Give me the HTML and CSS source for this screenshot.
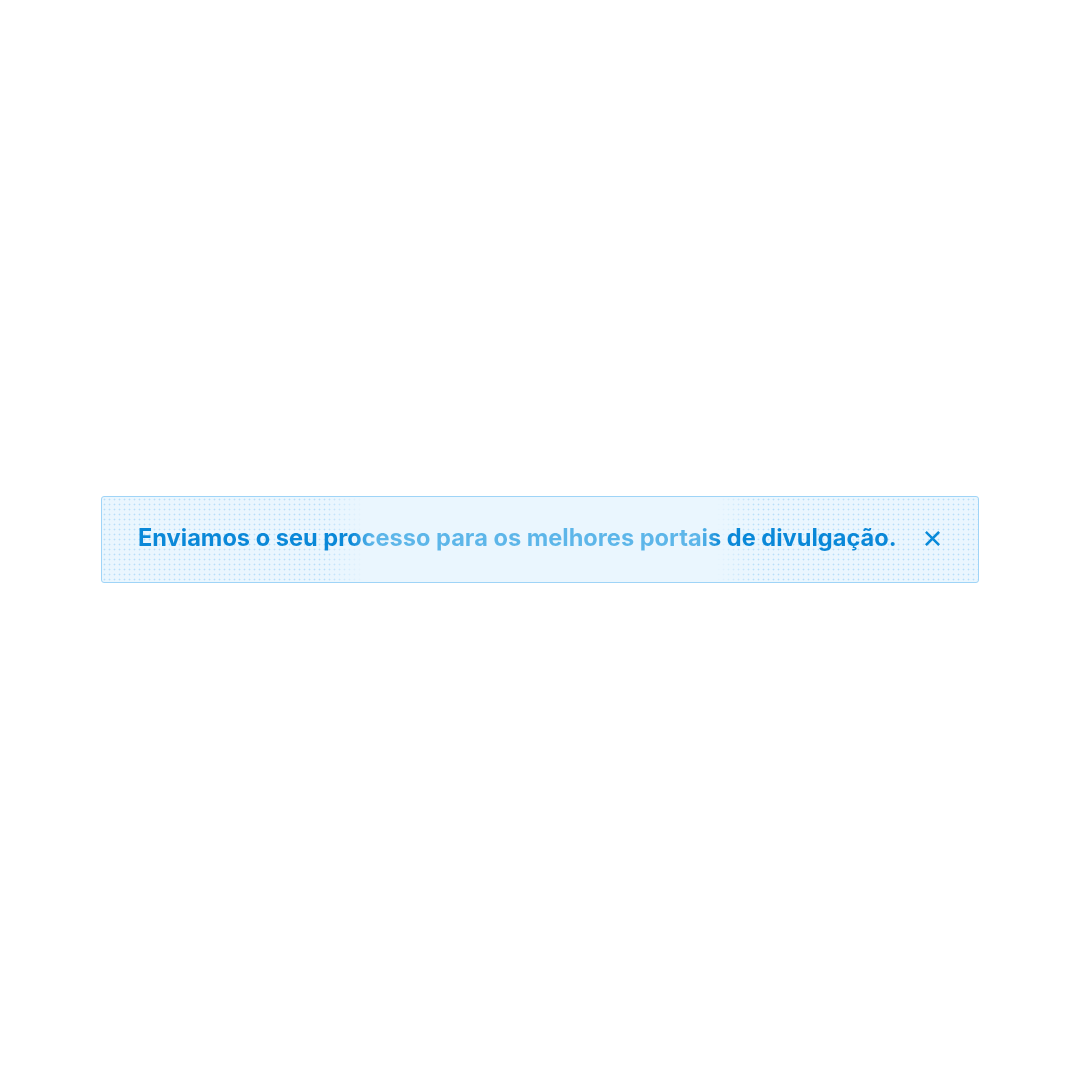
FILE: index.html
```html
<!DOCTYPE html>
<html lang="pt">
<head>
<meta charset="utf-8">
<link rel="stylesheet" href="styles.css">
</head>
<body>
<div class="page">
  <div class="banner">
    <div class="dots dots-left"></div>
    <div class="dots dots-right"></div>
    <div class="content">
      <span class="message">Enviamos o seu processo para os melhores portais de divulgação.</span>
      <button class="close" aria-label="Fechar">
        <svg width="15" height="15" viewBox="0 0 15 15"><path d="M1.8 1.8 L13.2 13.2 M13.2 1.8 L1.8 13.2" stroke="#0b8bd9" stroke-width="2.6" stroke-linecap="square" fill="none"/></svg>
      </button>
    </div>
  </div>
</div>
</body>
</html>
```
FILE: styles.css
```css
html, body {
  margin: 0;
  padding: 0;
  background: #ffffff;
}
.page {
  width: 1080px;
  height: 1080px;
  display: flex;
  align-items: center;
  justify-content: center;
}
.banner {
  position: relative;
  width: 878px;
  height: 87px;
  margin-top: -1px;
  box-sizing: border-box;
  border: 1px solid #9fd4f7;
  border-radius: 3px;
  background: #eaf6fe;
  overflow: hidden;
  display: flex;
  align-items: center;
}
.dots {
  position: absolute;
  top: 0;
  bottom: 0;
  width: 262px;
  background-image: radial-gradient(circle, #b8def9 0.8px, transparent 1.1px);
  background-size: 5px 5px;
}
.dots-left {
  left: 0;
  -webkit-mask-image: linear-gradient(to right, #000 85%, transparent 100%);
  mask-image: linear-gradient(to right, #000 85%, transparent 100%);
}
.dots-right {
  right: 0;
  -webkit-mask-image: linear-gradient(to left, #000 85%, transparent 100%);
  mask-image: linear-gradient(to left, #000 85%, transparent 100%);
}
.content {
  position: relative;
  display: flex;
  align-items: center;
  padding-left: 36px;
  padding-bottom: 3px;
  gap: 28px;
}
.message {
  font-family: Inter, "Noto Sans", sans-serif;
  font-weight: 700;
  font-size: 23.6px;
  letter-spacing: 0;
  line-height: 28px;
  background-image: linear-gradient(to right, #0a88d8 0%, #0a88d8 28%, #5db6e9 31%, #5db6e9 74%, #0a88d8 77%, #0a88d8 100%);
  -webkit-background-clip: text;
  background-clip: text;
  color: transparent;
}
.close {
  border: 0;
  background: transparent;
  padding: 0;
  width: 16px;
  height: 16px;
  display: flex;
  align-items: center;
  justify-content: center;
  cursor: pointer;
}
```
